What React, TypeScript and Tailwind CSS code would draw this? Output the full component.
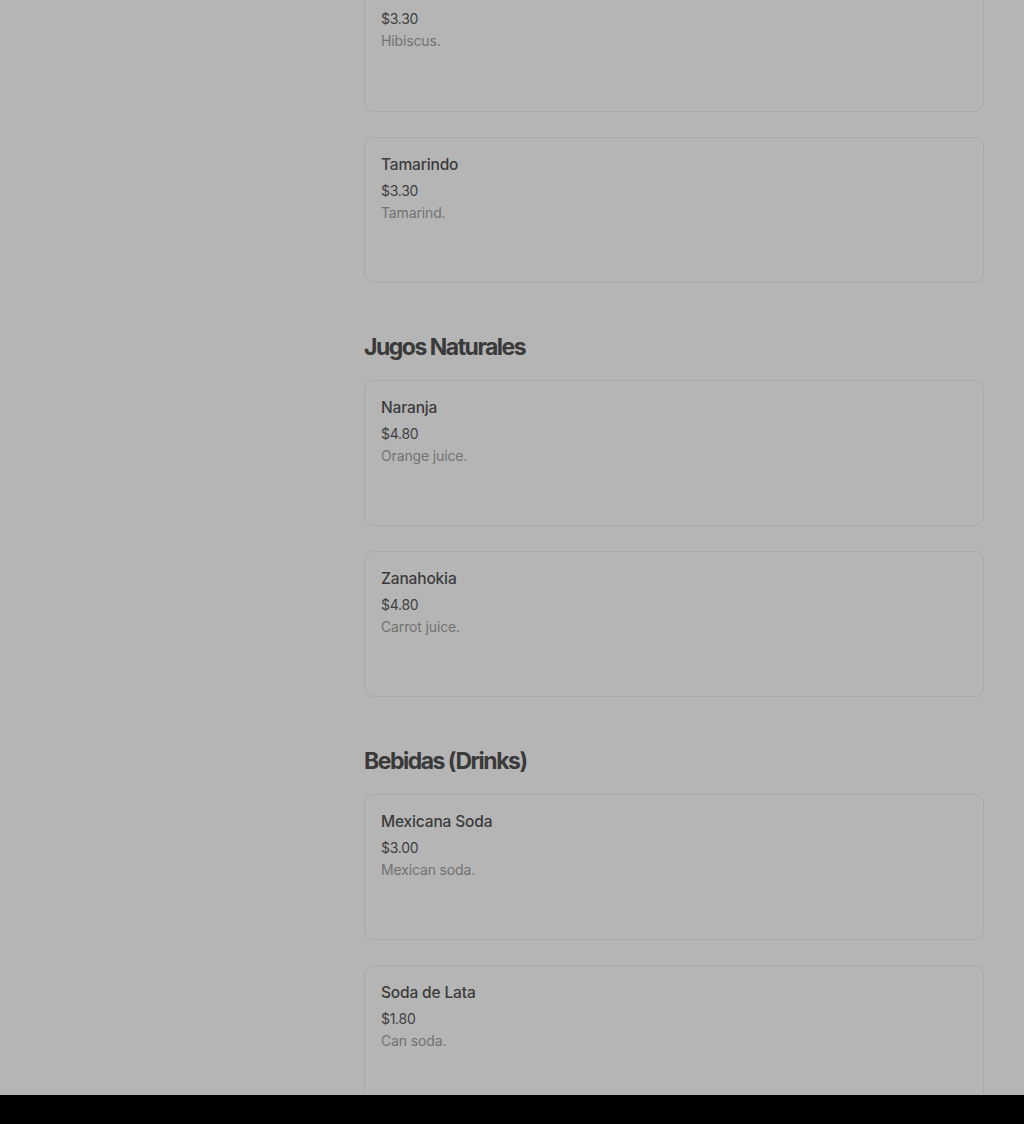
import React from "react";

type Item = { name?: string; price: string; desc: string };

const Card = ({ item }: { item: Item }) => (
  <div className="h-[146px] shrink-0 rounded-[10px] border border-[#a9a9a9] px-4 pt-[15px]">
    <div className="text-[15.5px] leading-6 font-medium tracking-[-0.01em] text-[#3b3b3b]">{item.name}</div>
    <div className="text-[14px] leading-5 tracking-[-0.02em] text-[#3f3f3f] mt-[4px]">{item.price}</div>
    <div className="text-[14px] leading-5 text-[#727272] mt-[2px] tracking-[-0.01em]">{item.desc}</div>
  </div>
);

const Heading = ({ children }: { children: React.ReactNode }) => (
  <h2 className="mt-[48px] mb-[17px] text-[23px] leading-8 font-bold tracking-[-0.065em] text-[#3a3a3a]">
    {children}
  </h2>
);

export default function App() {
  return (
    <div
      className="h-[1124px] w-[1024px] flex flex-col overflow-hidden bg-[#b5b5b5]"
      style={{ fontFamily: "Inter, 'Noto Sans', sans-serif" }}
    >
      <div className="flex-1 overflow-hidden">
        <div className="ml-[364px] w-[620px] -mt-[34px] flex flex-col">
          <div className="flex flex-col gap-[25px]">
            <div className="h-[146px] shrink-0 rounded-[10px] border border-[#a9a9a9] px-4 pt-[42px]">
              <div className="text-[14px] leading-5 tracking-[-0.02em] text-[#3f3f3f]">$3.30</div>
              <div className="text-[14px] leading-5 text-[#727272] mt-[2px] tracking-[-0.01em]">Hibiscus.</div>
            </div>
            <Card item={{ name: "Tamarindo", price: "$3.30", desc: "Tamarind." }} />
          </div>
          <Heading>Jugos Naturales</Heading>
          <div className="flex flex-col gap-[25px]">
            <Card item={{ name: "Naranja", price: "$4.80", desc: "Orange juice." }} />
            <Card item={{ name: "Zanahokia", price: "$4.80", desc: "Carrot juice." }} />
          </div>
          <Heading>Bebidas (Drinks)</Heading>
          <div className="flex flex-col gap-[25px]">
            <Card item={{ name: "Mexicana Soda", price: "$3.00", desc: "Mexican soda." }} />
            <Card item={{ name: "Soda de Lata", price: "$1.80", desc: "Can soda." }} />
          </div>
        </div>
      </div>
      <div className="h-[29px] shrink-0 bg-black" />
    </div>
  );
}
